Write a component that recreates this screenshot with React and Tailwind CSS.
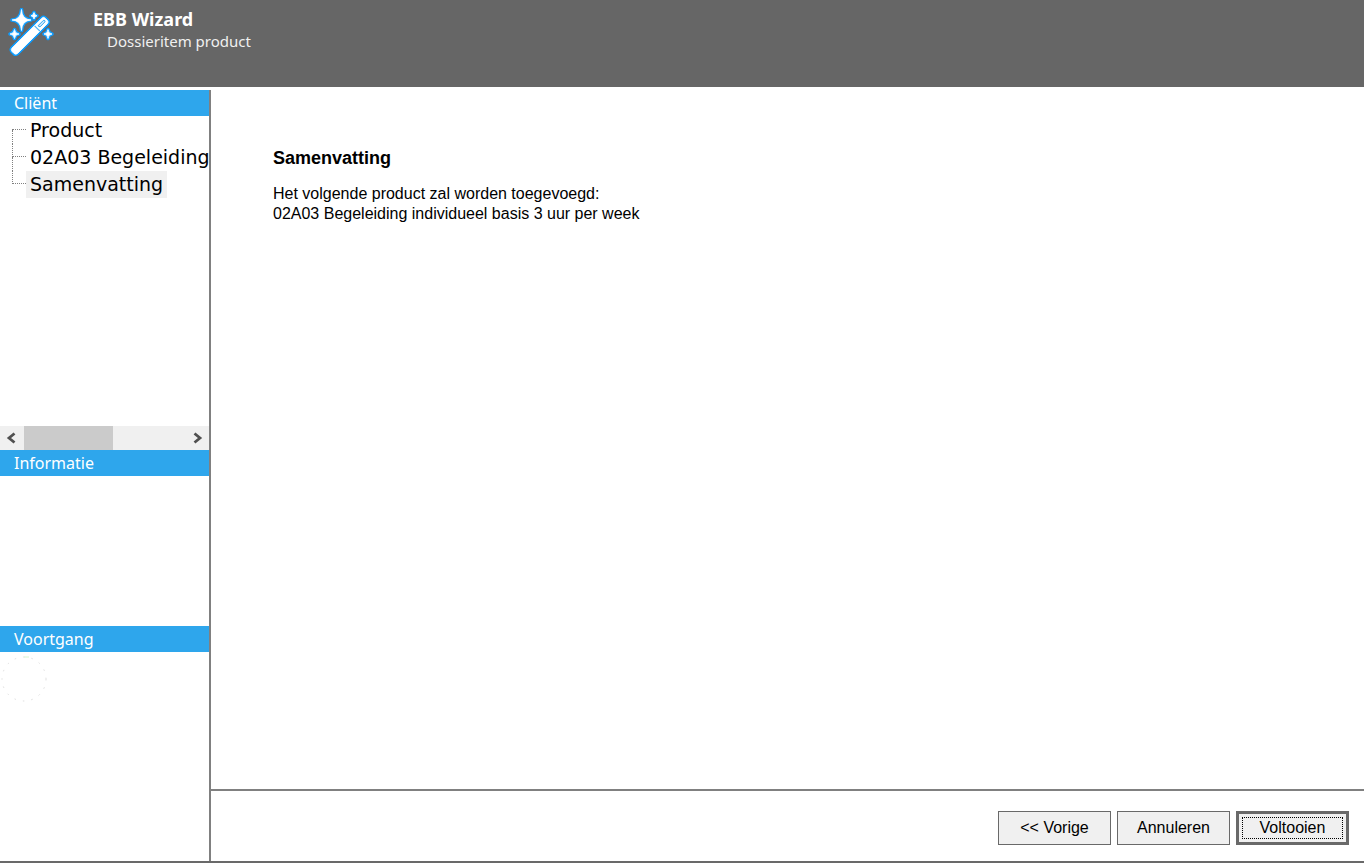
import { useState } from "react";

const steps = ["Product", "02A03 Begeleiding", "Samenvatting"];

function WandIcon() {
  return (
    <svg width="48" height="48" viewBox="0 0 48 48" aria-hidden="true">
      <defs>
        <filter id="glow" x="-20%" y="-20%" width="140%" height="140%">
          <feGaussianBlur stdDeviation="0.7" />
        </filter>
        <g id="wand">
          <path d="M15.5 1.5 Q15.9 11.6 25 12 Q15.9 12.6 15.5 22.5 Q14.9 12.6 6 12 Q14.9 11.6 15.5 1.5Z" />
          <path d="M28 4.5 Q28.4 7.4 31 7.8 Q28.4 8.2 28 11 Q27.6 8.2 25 7.8 Q27.6 7.4 28 4.5Z" />
          <path d="M8.5 21.5 Q8.9 25.6 13 26 Q8.9 26.4 8.5 30.5 Q8.1 26.4 4 26 Q8.1 25.6 8.5 21.5Z" />
          <path d="M42 21.5 Q42.4 25.6 46 26 Q42.4 26.4 42 30.5 Q41.6 26.4 38 26 Q41.6 25.6 42 21.5Z" />
          <path d="M6 40 L35.8 10.2 Q37.5 8.5 39.2 10.2 L41.3 12.3 Q43 14 41.3 15.7 L11.5 45.5 Q9.8 47 8 45.5 L6 43.5 Q4.5 41.7 6 40Z" />
        </g>
      </defs>
      <use href="#wand" fill="#0c9dff" stroke="#0c9dff" strokeWidth="3.6" strokeLinejoin="round" filter="url(#glow)" />
      <use href="#wand" fill="#ffffff" stroke="#ffffff" strokeWidth="0.8" />
      <path d="M28.6 17.8 L33.8 23" stroke="#4cb6f7" strokeWidth="1.1" />
      <path d="M32 17.8 L37.4 12.4 Q39.2 11.8 39 13.8 L34 18.9Z" fill="#d5ecfb" stroke="#1a9df0" strokeWidth="0.9" />
    </svg>
  );
}

function PanelTitle({ children }) {
  return (
    <h2 className="h-[26px] shrink-0 bg-[#2ea6ec] px-3.5 font-['Noto_Sans',sans-serif] text-base leading-[26px] text-white">
      {children}
    </h2>
  );
}

function StepTree({ current, onSelect }) {
  return (
    <ul className="pt-px pl-3 font-['DejaVu_Sans',sans-serif] text-[19px] leading-[27px] text-black">
      {steps.map((step, i) => (
        <li key={step} className="flex h-[27px]">
          {/* Dotted connector lines */}
          <span className="flex w-3.5 shrink-0 flex-col">
            <span className={`h-[13px] border-b border-dotted border-[#808080] ${i > 0 ? "border-l" : ""}`} />
            <span className={`flex-1 border-dotted border-[#808080] ${i < steps.length - 1 ? "border-l" : ""}`} />
          </span>
          <button
            type="button"
            onClick={() => onSelect(step)}
            className={`pr-1 pl-1 text-left whitespace-nowrap ${current === step ? "bg-[#f0f0f0]" : ""}`}
          >
            {step}
          </button>
        </li>
      ))}
    </ul>
  );
}

function ScrollArrow({ label, d }) {
  return (
    <button type="button" aria-label={label} className="flex w-6 shrink-0 items-center justify-center">
      <svg width="12" height="12" viewBox="0 0 12 12" fill="none" stroke="#505050" strokeWidth="2.8">
        <path d={d} />
      </svg>
    </button>
  );
}

function WizardButton({ primary, children }) {
  if (primary) {
    return (
      <button type="button" className="h-[34px] w-[113px] border-[3px] border-[#696969] bg-[#f0f0f0] p-[3px]">
        <span className="flex h-full items-center justify-center border border-dotted border-black">{children}</span>
      </button>
    );
  }
  return (
    <button type="button" className="h-[34px] w-[113px] border border-[#696969] bg-[#f0f0f0]">
      {children}
    </button>
  );
}

function App() {
  const [current, setCurrent] = useState("Samenvatting");

  return (
    <div className="flex min-h-screen flex-col bg-white text-black">
      <header className="flex h-[87px] shrink-0 bg-[#666666] pt-2 pl-1.5 font-['Noto_Sans',sans-serif] text-white">
        <WandIcon />
        <div className="pl-[39px]">
          <h1 className="text-lg leading-[22px] font-bold">EBB Wizard</h1>
          <p className="pl-3.5 text-[15px] leading-[22px] text-[#f0f0f0]">Dossieritem product</p>
        </div>
      </header>

      <div className="mb-px flex flex-1 border-b-2 border-[#696969] pt-[3px]">
        <aside className="flex w-[211px] shrink-0 flex-col border-r-2 border-[#808080]">
          <section className="flex h-[360px] flex-col">
            <PanelTitle>Cliënt</PanelTitle>
            <StepTree current={current} onSelect={setCurrent} />
            <div className="mt-auto flex h-6 bg-[#f0f0f0]">
              <ScrollArrow label="Naar links" d="M8.5 1.5 L3 6 L8.5 10.5" />
              <div className="w-[89px] bg-[#cbcbcb]" />
              <div className="flex-1" />
              <ScrollArrow label="Naar rechts" d="M3.5 1.5 L9 6 L3.5 10.5" />
            </div>
          </section>
          <section className="h-44">
            <PanelTitle>Informatie</PanelTitle>
          </section>
          <section className="flex-1">
            <PanelTitle>Voortgang</PanelTitle>
            <svg width="48" height="52" viewBox="0 0 48 52" fill="none" aria-hidden="true">
              <circle cx="24" cy="27" r="22" stroke="#dedede" strokeDasharray="1.5 7" />
              <path d="M24 5 H29" stroke="#d4f7d0" />
            </svg>
          </section>
        </aside>

        <div className="flex flex-1 flex-col font-['Liberation_Sans',sans-serif]">
          <main className="flex-1 px-[62px] pt-[58px]">
            <h2 className="text-lg leading-5 font-bold">Samenvatting</h2>
            <p className="mt-4 text-base leading-5">
              Het volgende product zal worden toegevoegd:
              <br />
              02A03 Begeleiding individueel basis 3 uur per week
            </p>
          </main>
          <footer className="flex h-[72px] shrink-0 items-center justify-end gap-1.5 border-t-2 border-[#808080] px-[15px] pt-1 text-base">
            <WizardButton>&lt;&lt; Vorige</WizardButton>
            <WizardButton>Annuleren</WizardButton>
            <WizardButton primary>Voltooien</WizardButton>
          </footer>
        </div>
      </div>
    </div>
  );
}

export default App;
